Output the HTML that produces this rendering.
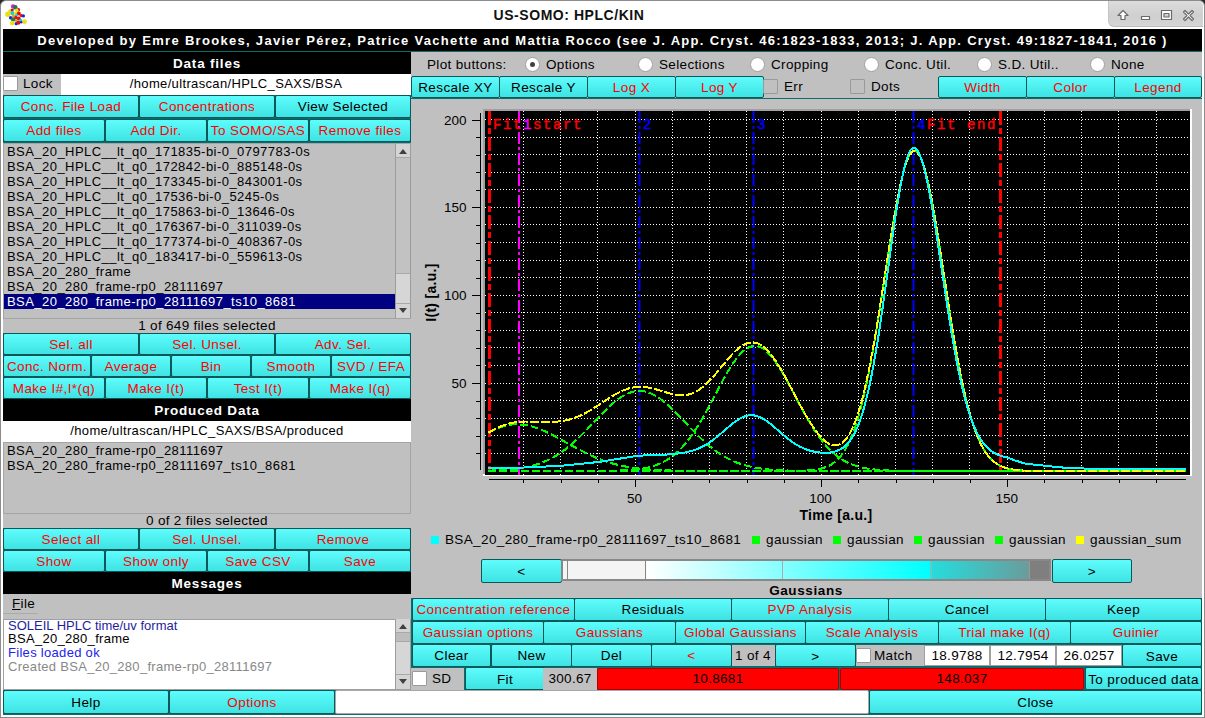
<!DOCTYPE html><html><head><meta charset="utf-8"><style>
*{margin:0;padding:0;box-sizing:border-box}
html,body{width:1205px;height:718px;overflow:hidden;background:#2a2a2a;font-family:"Liberation Sans",sans-serif;}
.t{position:absolute;white-space:nowrap;line-height:20px;font-size:13.5px;letter-spacing:0.35px;color:#000}
.b{position:absolute;box-sizing:content-box;border:1px solid #0a5858;border-radius:2px;background:linear-gradient(#5ffcfc,#3ee3e3);text-align:center;white-space:nowrap;overflow:hidden;font-size:13.5px;letter-spacing:0.4px}
.hb{position:absolute;background:#000;color:#fff;font-weight:bold;text-align:center;white-space:nowrap}
</style></head><body>
<div style="position:absolute;left:0;top:0;width:1205px;height:718px;background:#fff;border-radius:6px 6px 0 0;border:1px solid #8c8c8c;"></div>

<div style="position:absolute;left:1108px;top:1px;width:95px;height:26px;background:linear-gradient(#dcdcdc,#cfcfcf 60%,#d6d6d6);border-radius:0 5px 0 6px;border-bottom:1px solid #bdbdbd;border-left:1px solid #c4c4c4"></div>
<svg style="position:absolute;left:1108px;top:0" width="95" height="27">
<g fill="#fff" stroke="#6a6a6a" stroke-width="1.2" stroke-linejoin="round">
<path d="M15 10.5 L20 15.5 L17 15.5 L17 19.5 L13 19.5 L13 15.5 L10 15.5 Z"/>
<rect x="33.5" y="16.5" width="8" height="3"/>
<path d="M53.5 10.5 h10 v9 h-10 Z M56 13.5 v3.5 h5 v-3.5 Z" fill-rule="evenodd"/>
<path d="M75.5 12 L77 10.5 L80.5 14 L84 10.5 L85.5 12 L82 15.5 L85.5 19 L84 20.5 L80.5 17 L77 20.5 L75.5 19 L79 15.5 Z"/>
</g></svg>
<svg style="position:absolute;left:0px;top:0px" width="30" height="30"><circle cx="13.1" cy="6.4" r="2.1999999999999997" fill="#d020d0"/><circle cx="15.3" cy="7.4" r="2.3" fill="#207a50"/><circle cx="18.4" cy="9.7" r="1.8" fill="#e01010"/><circle cx="10" cy="11" r="1.8" fill="#e8e010"/><circle cx="12.2" cy="10.1" r="1.6" fill="#e01010"/><circle cx="16.7" cy="10.3" r="1.8" fill="#e8e010"/><circle cx="12.3" cy="13.1" r="2.1" fill="#10d0e0"/><circle cx="15.6" cy="13.4" r="1.7" fill="#e8e010"/><circle cx="18.8" cy="13.6" r="2.0" fill="#e01010"/><circle cx="21.4" cy="15.6" r="1.7" fill="#e01010"/><circle cx="23.4" cy="15.9" r="1.6" fill="#2020e0"/><circle cx="7.9" cy="14.2" r="2.6999999999999997" fill="#e8e010"/><circle cx="16.4" cy="15.3" r="1.4000000000000001" fill="#10d0e0"/><circle cx="13.4" cy="16" r="1.4000000000000001" fill="#f09010"/><circle cx="10.6" cy="17.8" r="1.7" fill="#2020e0"/><circle cx="15.9" cy="17.5" r="1.7" fill="#e01010"/><circle cx="18.7" cy="18.4" r="2.0" fill="#e01010"/><circle cx="13.1" cy="19.5" r="2.1999999999999997" fill="#207a50"/><circle cx="16.2" cy="20.6" r="1.4000000000000001" fill="#f09010"/><circle cx="20.6" cy="20.4" r="1.6" fill="#10d0e0"/><circle cx="24.5" cy="21.7" r="2.4" fill="#e8e010"/><circle cx="12.2" cy="23.1" r="2.3" fill="#e8e010"/><circle cx="16.2" cy="23.7" r="1.6" fill="#2020e0"/><circle cx="18.4" cy="22.8" r="2.0" fill="#e01010"/><circle cx="21.2" cy="22.3" r="1.2" fill="#2020e0"/></svg>
<div class="t" style="left:269px;width:600px;text-align:center;top:5px;font-weight:bold;font-size:14px;color:#111;letter-spacing:0.55px">US-SOMO: HPLC/KIN</div>
<div style="position:absolute;left:3px;top:29px;width:1199px;height:686px;background:#0b6d6d"></div>
<div class="hb" style="left:3px;top:29px;width:1199px;height:22px;line-height:22px;padding-top:1px;font-size:13px;letter-spacing:1.3px">Developed by Emre Brookes, Javier Pérez, Patrice Vachette and Mattia Rocco (see J. App. Cryst. 46:1823-1833, 2013; J. App. Cryst. 49:1827-1841, 2016 )</div>
<div class="hb" style="left:3px;top:52px;width:408px;height:22px;line-height:22px;padding-top:1px;font-size:13.5px;letter-spacing:0.8px">Data files</div>
<div style="position:absolute;left:3px;top:74px;width:58px;height:21px;background:#c0c0c0"></div>
<div style="position:absolute;left:3px;top:76px;width:15px;height:15px;background:#fff;border:1px solid #9a9a9a;border-radius:1px"></div>
<div class="t" style="left:23px;top:74px;font-size:13.5px">Lock</div>
<div style="position:absolute;left:61px;top:74px;width:350px;height:21px;background:#fff"></div>
<div class="t" style="left:-64px;width:600px;text-align:center;top:74px;font-size:13px">/home/ultrascan/HPLC_SAXS/BSA</div>
<div class="b" style="left:3px;top:95px;width:134px;height:21px;color:#ff0000;font-size:13.5px;line-height:21px;letter-spacing:0.4px">Conc. File Load</div>
<div class="b" style="left:139px;top:95px;width:134px;height:21px;color:#ff0000;font-size:13.5px;line-height:21px;letter-spacing:0.4px">Concentrations</div>
<div class="b" style="left:275px;top:95px;width:134px;height:21px;color:#000;font-size:13.5px;line-height:21px;letter-spacing:0.4px">View Selected</div>
<div class="b" style="left:3px;top:119px;width:100px;height:21px;color:#ff0000;font-size:13.5px;line-height:21px;letter-spacing:0.4px">Add files</div>
<div class="b" style="left:105px;top:119px;width:100px;height:21px;color:#ff0000;font-size:13.5px;line-height:21px;letter-spacing:0.4px">Add Dir.</div>
<div class="b" style="left:207px;top:119px;width:100px;height:21px;color:#ff0000;font-size:13.5px;line-height:21px;letter-spacing:0.4px">To SOMO/SAS</div>
<div class="b" style="left:309px;top:119px;width:100px;height:21px;color:#ff0000;font-size:13.5px;line-height:21px;letter-spacing:0.4px">Remove files</div>
<div style="position:absolute;left:3px;top:143px;width:408px;height:176px;background:#c0c0c0;border:1px solid #a4a4a4"></div>
<div class="t" style="left:7px;top:141.5px;font-size:13px;letter-spacing:0.45px">BSA_20_HPLC__lt_q0_171835-bi-0_0797783-0s</div>
<div class="t" style="left:7px;top:156.5px;font-size:13px;letter-spacing:0.45px">BSA_20_HPLC__lt_q0_172842-bi-0_885148-0s</div>
<div class="t" style="left:7px;top:171.5px;font-size:13px;letter-spacing:0.45px">BSA_20_HPLC__lt_q0_173345-bi-0_843001-0s</div>
<div class="t" style="left:7px;top:186.5px;font-size:13px;letter-spacing:0.45px">BSA_20_HPLC__lt_q0_17536-bi-0_5245-0s</div>
<div class="t" style="left:7px;top:201.5px;font-size:13px;letter-spacing:0.45px">BSA_20_HPLC__lt_q0_175863-bi-0_13646-0s</div>
<div class="t" style="left:7px;top:216.5px;font-size:13px;letter-spacing:0.45px">BSA_20_HPLC__lt_q0_176367-bi-0_311039-0s</div>
<div class="t" style="left:7px;top:231.5px;font-size:13px;letter-spacing:0.45px">BSA_20_HPLC__lt_q0_177374-bi-0_408367-0s</div>
<div class="t" style="left:7px;top:246.5px;font-size:13px;letter-spacing:0.45px">BSA_20_HPLC__lt_q0_183417-bi-0_559613-0s</div>
<div class="t" style="left:7px;top:261.5px;font-size:13px;letter-spacing:0.45px">BSA_20_280_frame</div>
<div class="t" style="left:7px;top:276.5px;font-size:13px;letter-spacing:0.45px">BSA_20_280_frame-rp0_28111697</div>
<div style="position:absolute;left:4px;top:294px;width:391px;height:15px;background:#000080"></div>
<div class="t" style="left:7px;top:291.5px;font-size:13px;color:#fff;letter-spacing:0.45px">BSA_20_280_frame-rp0_28111697_ts10_8681</div>
<div style="position:absolute;left:395px;top:144px;width:16px;height:174px;background:#d6d6d6;border-left:1px solid #9c9c9c;border-right:1px solid #9c9c9c"></div>
<div style="position:absolute;left:396px;top:144px;width:14px;height:14px;background:#d4d4d4;border-bottom:1px solid #a8a8a8"></div>
<svg style="position:absolute;left:396px;top:144px" width="14" height="14"><path d="M3 10 L7 5 L11 10 Z" fill="#404040"/></svg>
<div style="position:absolute;left:396px;top:158px;width:14px;height:116px;background:#c2c2c2;border-bottom:1px solid #a8a8a8"></div>
<div style="position:absolute;left:396px;top:303px;width:14px;height:15px;background:#d4d4d4;border-top:1px solid #a8a8a8"></div>
<svg style="position:absolute;left:396px;top:303px" width="14" height="14"><path d="M3 5 L7 10 L11 5 Z" fill="#404040"/></svg>
<div style="position:absolute;left:3px;top:319px;width:408px;height:14px;background:#c0c0c0"></div>
<div class="t" style="left:-93px;width:600px;text-align:center;top:316px;font-size:13.5px;letter-spacing:0.3px">1 of 649 files selected</div>
<div class="b" style="left:3px;top:333px;width:134px;height:20px;color:#ff0000;font-size:13.5px;line-height:22px;letter-spacing:0.4px">Sel. all</div>
<div class="b" style="left:139px;top:333px;width:134px;height:20px;color:#ff0000;font-size:13.5px;line-height:22px;letter-spacing:0.4px">Sel. Unsel.</div>
<div class="b" style="left:275px;top:333px;width:134px;height:20px;color:#ff0000;font-size:13.5px;line-height:22px;letter-spacing:0.4px">Adv. Sel.</div>
<div class="b" style="left:3px;top:355px;width:86px;height:20px;color:#ff0000;font-size:13.5px;line-height:22px;letter-spacing:0.4px">Conc. Norm.</div>
<div class="b" style="left:91px;top:355px;width:78px;height:20px;color:#ff0000;font-size:13.5px;line-height:22px;letter-spacing:0.4px">Average</div>
<div class="b" style="left:171px;top:355px;width:78px;height:20px;color:#ff0000;font-size:13.5px;line-height:22px;letter-spacing:0.4px">Bin</div>
<div class="b" style="left:251px;top:355px;width:78px;height:20px;color:#ff0000;font-size:13.5px;line-height:22px;letter-spacing:0.4px">Smooth</div>
<div class="b" style="left:331px;top:355px;width:78px;height:20px;color:#ff0000;font-size:13.5px;line-height:22px;letter-spacing:0.4px">SVD / EFA</div>
<div class="b" style="left:3px;top:377px;width:100px;height:20px;color:#ff0000;font-size:13.5px;line-height:22px;letter-spacing:0.4px">Make I#,I*(q)</div>
<div class="b" style="left:105px;top:377px;width:100px;height:20px;color:#ff0000;font-size:13.5px;line-height:22px;letter-spacing:0.4px">Make I(t)</div>
<div class="b" style="left:207px;top:377px;width:100px;height:20px;color:#ff0000;font-size:13.5px;line-height:22px;letter-spacing:0.4px">Test I(t)</div>
<div class="b" style="left:309px;top:377px;width:100px;height:20px;color:#ff0000;font-size:13.5px;line-height:22px;letter-spacing:0.4px">Make I(q)</div>
<div class="hb" style="left:3px;top:399px;width:408px;height:22px;line-height:22px;padding-top:1px;font-size:13.5px;letter-spacing:0.8px">Produced Data</div>
<div style="position:absolute;left:3px;top:421px;width:408px;height:21px;background:#fff"></div>
<div class="t" style="left:-93px;width:600px;text-align:center;top:421px;font-size:13px">/home/ultrascan/HPLC_SAXS/BSA/produced</div>
<div style="position:absolute;left:3px;top:442px;width:408px;height:72px;background:#c0c0c0;border:1px solid #a4a4a4"></div>
<div class="t" style="left:7px;top:441px;font-size:13px;letter-spacing:0.45px">BSA_20_280_frame-rp0_28111697</div>
<div class="t" style="left:7px;top:456px;font-size:13px;letter-spacing:0.45px">BSA_20_280_frame-rp0_28111697_ts10_8681</div>
<div style="position:absolute;left:3px;top:514px;width:408px;height:14px;background:#c0c0c0"></div>
<div class="t" style="left:-93px;width:600px;text-align:center;top:511px;font-size:13.5px;letter-spacing:0.3px">0 of 2 files selected</div>
<div class="b" style="left:3px;top:528px;width:134px;height:20px;color:#ff0000;font-size:13.5px;line-height:22px;letter-spacing:0.4px">Select all</div>
<div class="b" style="left:139px;top:528px;width:134px;height:20px;color:#ff0000;font-size:13.5px;line-height:22px;letter-spacing:0.4px">Sel. Unsel.</div>
<div class="b" style="left:275px;top:528px;width:134px;height:20px;color:#ff0000;font-size:13.5px;line-height:22px;letter-spacing:0.4px">Remove</div>
<div class="b" style="left:3px;top:550px;width:100px;height:20px;color:#ff0000;font-size:13.5px;line-height:22px;letter-spacing:0.4px">Show</div>
<div class="b" style="left:105px;top:550px;width:100px;height:20px;color:#ff0000;font-size:13.5px;line-height:22px;letter-spacing:0.4px">Show only</div>
<div class="b" style="left:207px;top:550px;width:100px;height:20px;color:#ff0000;font-size:13.5px;line-height:22px;letter-spacing:0.4px">Save CSV</div>
<div class="b" style="left:309px;top:550px;width:100px;height:20px;color:#ff0000;font-size:13.5px;line-height:22px;letter-spacing:0.4px">Save</div>
<div class="hb" style="left:3px;top:572px;width:408px;height:22px;line-height:22px;padding-top:1px;font-size:13.5px;letter-spacing:0.8px">Messages</div>
<div style="position:absolute;left:3px;top:594px;width:408px;height:25px;background:#c0c0c0"></div>
<div class="t" style="left:12px;top:594px;font-size:13.5px"><u>F</u>ile</div>
<div style="position:absolute;left:3px;top:613px;width:35px;height:1px;background:#ababab"></div>
<div style="position:absolute;left:3px;top:619px;width:408px;height:71px;background:#fff;border:1px solid #a0a0a0"></div>
<div class="t" style="left:8px;top:615.5px;font-size:13px;color:#1e1e9e;letter-spacing:0.0px">SOLEIL HPLC time/uv format</div>
<div class="t" style="left:8px;top:629.3px;font-size:13px;color:#000;letter-spacing:0.3px">BSA_20_280_frame</div>
<div class="t" style="left:8px;top:643.1px;font-size:13px;color:#2222ee;letter-spacing:0.3px">Files loaded ok</div>
<div class="t" style="left:8px;top:656.9px;font-size:13px;color:#888;letter-spacing:0.3px">Created BSA_20_280_frame-rp0_28111697</div>
<div style="position:absolute;left:395px;top:619px;width:16px;height:70px;background:#d6d6d6;border-left:1px solid #9c9c9c;border-right:1px solid #9c9c9c"></div>
<div style="position:absolute;left:396px;top:619px;width:14px;height:14px;background:#d4d4d4;border-bottom:1px solid #a8a8a8"></div>
<svg style="position:absolute;left:396px;top:619px" width="14" height="14"><path d="M3 10 L7 5 L11 10 Z" fill="#404040"/></svg>
<div style="position:absolute;left:396px;top:633px;width:14px;height:9px;background:#bdbdbd;border-bottom:1px solid #a8a8a8"></div>
<div style="position:absolute;left:396px;top:674px;width:14px;height:15px;background:#d4d4d4;border-top:1px solid #a8a8a8"></div>
<svg style="position:absolute;left:396px;top:674px" width="14" height="14"><path d="M3 5 L7 10 L11 5 Z" fill="#404040"/></svg>
<div class="b" style="left:3px;top:690px;width:164px;height:22px;color:#000;font-size:13.5px;line-height:24px;letter-spacing:0.4px">Help</div>
<div class="b" style="left:169px;top:690px;width:164px;height:22px;color:#ff0000;font-size:13.5px;line-height:24px;letter-spacing:0.4px">Options</div>
<div style="position:absolute;left:335px;top:690px;width:534px;height:24px;background:#fff;border:1px solid #a8a8a8;border-radius:2px"></div>
<div class="b" style="left:869px;top:690px;width:331px;height:22px;color:#000;font-size:13.5px;line-height:24px;letter-spacing:0.4px">Close</div>
<div style="position:absolute;left:411px;top:52px;width:791px;height:25px;background:#c0c0c0"></div>
<div class="t" style="left:427px;top:54.5px;font-size:13.5px">Plot buttons:</div>
<div style="position:absolute;left:525px;top:57px;width:13px;height:13px;border-radius:50%;background:#fff;border:1px solid #a0a0a0;box-sizing:content-box"><div style="position:absolute;left:4px;top:4px;width:5px;height:5px;border-radius:50%;background:#404040"></div></div>
<div class="t" style="left:546px;top:54.5px;font-size:13.5px">Options</div>
<div style="position:absolute;left:638px;top:57px;width:13px;height:13px;border-radius:50%;background:#fff;border:1px solid #a0a0a0;box-sizing:content-box"></div>
<div class="t" style="left:659px;top:54.5px;font-size:13.5px">Selections</div>
<div style="position:absolute;left:750px;top:57px;width:13px;height:13px;border-radius:50%;background:#fff;border:1px solid #a0a0a0;box-sizing:content-box"></div>
<div class="t" style="left:771px;top:54.5px;font-size:13.5px">Cropping</div>
<div style="position:absolute;left:864px;top:57px;width:13px;height:13px;border-radius:50%;background:#fff;border:1px solid #a0a0a0;box-sizing:content-box"></div>
<div class="t" style="left:885px;top:54.5px;font-size:13.5px">Conc. Util.</div>
<div style="position:absolute;left:977px;top:57px;width:13px;height:13px;border-radius:50%;background:#fff;border:1px solid #a0a0a0;box-sizing:content-box"></div>
<div class="t" style="left:998px;top:54.5px;font-size:13.5px">S.D. Util..</div>
<div style="position:absolute;left:1090px;top:57px;width:13px;height:13px;border-radius:50%;background:#fff;border:1px solid #a0a0a0;box-sizing:content-box"></div>
<div class="t" style="left:1111px;top:54.5px;font-size:13.5px">None</div>
<div style="position:absolute;left:411px;top:76px;width:791px;height:22px;background:#c0c0c0"></div>
<div class="b" style="left:411px;top:76px;width:87px;height:20px;color:#000;font-size:13.5px;line-height:22px;letter-spacing:0.4px">Rescale XY</div>
<div class="b" style="left:499px;top:76px;width:87px;height:20px;color:#000;font-size:13.5px;line-height:22px;letter-spacing:0.4px">Rescale Y</div>
<div class="b" style="left:587px;top:76px;width:87px;height:20px;color:#ff0000;font-size:13.5px;line-height:22px;letter-spacing:0.4px">Log X</div>
<div class="b" style="left:675px;top:76px;width:87px;height:20px;color:#ff0000;font-size:13.5px;line-height:22px;letter-spacing:0.4px">Log Y</div>
<div style="position:absolute;left:763px;top:79px;width:15px;height:15px;background:#c0c0c0;border:1px solid #9a9a9a;border-radius:1px"></div>
<div class="t" style="left:784px;top:76.5px;font-size:13.5px">Err</div>
<div style="position:absolute;left:850px;top:79px;width:15px;height:15px;background:#c0c0c0;border:1px solid #9a9a9a;border-radius:1px"></div>
<div class="t" style="left:871px;top:76.5px;font-size:13.5px">Dots</div>
<div class="b" style="left:938px;top:76px;width:87px;height:20px;color:#ff0000;font-size:13.5px;line-height:22px;letter-spacing:0.4px">Width</div>
<div class="b" style="left:1026px;top:76px;width:87px;height:20px;color:#ff0000;font-size:13.5px;line-height:22px;letter-spacing:0.4px">Color</div>
<div class="b" style="left:1114px;top:76px;width:86px;height:20px;color:#ff0000;font-size:13.5px;line-height:22px;letter-spacing:0.4px">Legend</div>
<div style="position:absolute;left:411px;top:99px;width:791px;height:499px;background:#c0c0c0"></div>
<div style="position:absolute;left:431px;top:536px;width:8px;height:8px;background:#00ffff"></div>
<div class="t" style="left:445px;top:530px;font-size:13.5px;letter-spacing:0.37px">BSA_20_280_frame-rp0_28111697_ts10_8681</div>
<div style="position:absolute;left:752px;top:536px;width:8px;height:8px;background:#00ff00"></div>
<div class="t" style="left:766px;top:530px;font-size:13.5px;letter-spacing:0.37px">gaussian</div>
<div style="position:absolute;left:833px;top:536px;width:8px;height:8px;background:#00ff00"></div>
<div class="t" style="left:847px;top:530px;font-size:13.5px;letter-spacing:0.37px">gaussian</div>
<div style="position:absolute;left:914px;top:536px;width:8px;height:8px;background:#00ff00"></div>
<div class="t" style="left:928px;top:530px;font-size:13.5px;letter-spacing:0.37px">gaussian</div>
<div style="position:absolute;left:995px;top:536px;width:8px;height:8px;background:#00ff00"></div>
<div class="t" style="left:1009px;top:530px;font-size:13.5px;letter-spacing:0.37px">gaussian</div>
<div style="position:absolute;left:1076px;top:536px;width:8px;height:8px;background:#ffff00"></div>
<div class="t" style="left:1090px;top:530px;font-size:13.5px;letter-spacing:0.37px">gaussian_sum</div>
<div class="b" style="left:481px;top:559px;width:79px;height:22px;color:#000;font-size:13.5px;line-height:24px;letter-spacing:0.4px">&lt;</div>
<div class="b" style="left:1052px;top:559px;width:78px;height:22px;color:#000;font-size:13.5px;line-height:24px;letter-spacing:0.4px">&gt;</div>
<div style="position:absolute;left:561px;top:559px;width:490px;height:22px;background:#888;"></div>
<div style="position:absolute;left:563px;top:561px;width:486px;height:18px;background:linear-gradient(90deg,#f4f4f4 0px,#f4f4f4 83px,#ffffff 84px,#00ffff 368px,#26dcdc 369px,#6a9c9c 466px,#7f7f7f 467px,#7f7f7f 486px)"></div>
<div style="position:absolute;left:567px;top:561px;width:1px;height:18px;background:#888"></div>
<div style="position:absolute;left:645px;top:561px;width:1px;height:18px;background:#888"></div>
<div style="position:absolute;left:930px;top:561px;width:1px;height:18px;background:#aaa"></div>
<div style="position:absolute;left:782px;top:561px;width:1px;height:18px;background:#aaa"></div>
<div style="position:absolute;left:1029px;top:561px;width:1px;height:18px;background:#999"></div>
<div class="t" style="left:506px;width:600px;text-align:center;top:581px;font-weight:bold;font-size:13.5px;letter-spacing:0.6px">Gaussians</div>
<div class="b" style="left:412px;top:598px;width:161px;height:21px;color:#ff0000;font-size:13.5px;line-height:22.0px;letter-spacing:0.4px">Concentration reference</div>
<div class="b" style="left:574px;top:598px;width:156px;height:21px;color:#000;font-size:13.5px;line-height:22.0px;letter-spacing:0.4px">Residuals</div>
<div class="b" style="left:731px;top:598px;width:156px;height:21px;color:#ff0000;font-size:13.5px;line-height:22.0px;letter-spacing:0.4px">PVP Analysis</div>
<div class="b" style="left:888px;top:598px;width:156px;height:21px;color:#000;font-size:13.5px;line-height:22.0px;letter-spacing:0.4px">Cancel</div>
<div class="b" style="left:1045px;top:598px;width:155px;height:21px;color:#000;font-size:13.5px;line-height:22.0px;letter-spacing:0.4px">Keep</div>
<div class="b" style="left:412px;top:621px;width:130px;height:21px;color:#ff0000;font-size:13.5px;line-height:22.0px;letter-spacing:0.4px">Gaussian options</div>
<div class="b" style="left:543px;top:621px;width:131px;height:21px;color:#ff0000;font-size:13.5px;line-height:22.0px;letter-spacing:0.4px">Gaussians</div>
<div class="b" style="left:675px;top:621px;width:129px;height:21px;color:#ff0000;font-size:13.5px;line-height:22.0px;letter-spacing:0.4px">Global Gaussians</div>
<div class="b" style="left:805px;top:621px;width:132px;height:21px;color:#ff0000;font-size:13.5px;line-height:22.0px;letter-spacing:0.4px">Scale Analysis</div>
<div class="b" style="left:938px;top:621px;width:131px;height:21px;color:#ff0000;font-size:13.5px;line-height:22.0px;letter-spacing:0.4px">Trial make I(q)</div>
<div class="b" style="left:1070px;top:621px;width:130px;height:21px;color:#ff0000;font-size:13.5px;line-height:22.0px;letter-spacing:0.4px">Guinier</div>
<div class="b" style="left:412px;top:644px;width:77px;height:21px;color:#000;font-size:13.5px;line-height:22.0px;letter-spacing:0.4px">Clear</div>
<div class="b" style="left:491px;top:644px;width:79px;height:21px;color:#000;font-size:13.5px;line-height:22.0px;letter-spacing:0.4px">New</div>
<div class="b" style="left:571px;top:644px;width:79px;height:21px;color:#000;font-size:13.5px;line-height:22.0px;letter-spacing:0.4px">Del</div>
<div class="b" style="left:651px;top:644px;width:79px;height:21px;color:#ff0000;font-size:13.5px;line-height:22.0px;letter-spacing:0.4px">&lt;</div>
<div style="position:absolute;left:732px;top:645px;width:43px;height:21px;background:#c0c0c0"></div>
<div class="t" style="left:453px;width:600px;text-align:center;top:645.5px;font-size:13.5px">1 of 4</div>
<div class="b" style="left:775px;top:644px;width:79px;height:21px;color:#000;font-size:13.5px;line-height:23px;letter-spacing:0.4px">&gt;</div>
<div style="position:absolute;left:856px;top:645px;width:68px;height:21px;background:#c0c0c0"></div>
<div style="position:absolute;left:856px;top:648px;width:15px;height:15px;background:#fff;border:1px solid #9a9a9a;border-radius:1px"></div>
<div class="t" style="left:874px;top:645.5px;font-size:13.5px">Match</div>
<div style="position:absolute;left:924px;top:645px;width:66px;height:21px;background:#fff;border:1px solid #a0a0a0"></div>
<div class="t" style="left:657.0px;width:600px;text-align:center;top:645.5px;font-size:13.5px">18.9788</div>
<div style="position:absolute;left:990px;top:645px;width:66px;height:21px;background:#fff;border:1px solid #a0a0a0"></div>
<div class="t" style="left:723.0px;width:600px;text-align:center;top:645.5px;font-size:13.5px">12.7954</div>
<div style="position:absolute;left:1056px;top:645px;width:66px;height:21px;background:#fff;border:1px solid #a0a0a0"></div>
<div class="t" style="left:789.0px;width:600px;text-align:center;top:645.5px;font-size:13.5px">26.0257</div>
<div class="b" style="left:1122px;top:644px;width:78px;height:21px;color:#000;font-size:13.5px;line-height:23px;letter-spacing:0.4px">Save</div>
<div style="position:absolute;left:411px;top:668px;width:53px;height:22px;background:#c0c0c0"></div>
<div style="position:absolute;left:412px;top:671px;width:15px;height:15px;background:#fff;border:1px solid #9a9a9a;border-radius:1px"></div>
<div class="t" style="left:432px;top:668.5px;font-size:13.5px">SD</div>
<div class="b" style="left:465px;top:667px;width:78px;height:21px;color:#000;font-size:13.5px;line-height:23px;letter-spacing:0.4px">Fit</div>
<div style="position:absolute;left:543px;top:668px;width:54px;height:22px;background:#c0c0c0"></div>
<div class="t" style="left:270px;width:600px;text-align:center;top:668.5px;font-size:13.5px;letter-spacing:0.3px">300.67</div>
<div style="position:absolute;left:597px;top:668px;width:242px;height:22px;background:#ff0000;border:1px solid #b00000;border-radius:2px"></div>
<div class="t" style="left:418px;width:600px;text-align:center;top:669px;font-size:13.5px;letter-spacing:0.3px">10.8681</div>
<div style="position:absolute;left:840px;top:668px;width:244px;height:22px;background:#ff0000;border:1px solid #b00000;border-radius:2px"></div>
<div class="t" style="left:662px;width:600px;text-align:center;top:669px;font-size:13.5px;letter-spacing:0.3px">148.037</div>
<div class="b" style="left:1085px;top:667px;width:115px;height:21px;color:#000;font-size:13.5px;line-height:23px;letter-spacing:0.4px">To produced data</div>
<svg style="position:absolute;left:0;top:0" width="1205" height="718">
<rect x="483" y="109" width="709" height="367" fill="#fff"/>
<rect x="483" y="109" width="707" height="365" fill="#a0a0a0"/>
<rect x="485" y="111" width="705" height="364" fill="#000"/>
<defs><clipPath id="c"><rect x="485" y="111" width="705" height="364"/></clipPath></defs>
<g clip-path="url(#c)">
<line x1="523.5" y1="111" x2="523.5" y2="475" stroke="#fff" stroke-width="1" stroke-dasharray="1 2"/>
<line x1="560.5" y1="111" x2="560.5" y2="475" stroke="#fff" stroke-width="1" stroke-dasharray="1 2"/>
<line x1="597.5" y1="111" x2="597.5" y2="475" stroke="#fff" stroke-width="1" stroke-dasharray="1 2"/>
<line x1="635.5" y1="111" x2="635.5" y2="475" stroke="#fff" stroke-width="1" stroke-dasharray="1 2"/>
<line x1="672.5" y1="111" x2="672.5" y2="475" stroke="#fff" stroke-width="1" stroke-dasharray="1 2"/>
<line x1="709.5" y1="111" x2="709.5" y2="475" stroke="#fff" stroke-width="1" stroke-dasharray="1 2"/>
<line x1="746.5" y1="111" x2="746.5" y2="475" stroke="#fff" stroke-width="1" stroke-dasharray="1 2"/>
<line x1="783.5" y1="111" x2="783.5" y2="475" stroke="#fff" stroke-width="1" stroke-dasharray="1 2"/>
<line x1="821.5" y1="111" x2="821.5" y2="475" stroke="#fff" stroke-width="1" stroke-dasharray="1 2"/>
<line x1="858.5" y1="111" x2="858.5" y2="475" stroke="#fff" stroke-width="1" stroke-dasharray="1 2"/>
<line x1="895.5" y1="111" x2="895.5" y2="475" stroke="#fff" stroke-width="1" stroke-dasharray="1 2"/>
<line x1="932.5" y1="111" x2="932.5" y2="475" stroke="#fff" stroke-width="1" stroke-dasharray="1 2"/>
<line x1="969.5" y1="111" x2="969.5" y2="475" stroke="#fff" stroke-width="1" stroke-dasharray="1 2"/>
<line x1="1007.5" y1="111" x2="1007.5" y2="475" stroke="#fff" stroke-width="1" stroke-dasharray="1 2"/>
<line x1="1044.5" y1="111" x2="1044.5" y2="475" stroke="#fff" stroke-width="1" stroke-dasharray="1 2"/>
<line x1="1081.5" y1="111" x2="1081.5" y2="475" stroke="#fff" stroke-width="1" stroke-dasharray="1 2"/>
<line x1="1118.5" y1="111" x2="1118.5" y2="475" stroke="#fff" stroke-width="1" stroke-dasharray="1 2"/>
<line x1="1156.5" y1="111" x2="1156.5" y2="475" stroke="#fff" stroke-width="1" stroke-dasharray="1 2"/>
<line x1="485" y1="453.5" x2="1190" y2="453.5" stroke="#fff" stroke-width="1" stroke-dasharray="1 2"/>
<line x1="485" y1="435.5" x2="1190" y2="435.5" stroke="#fff" stroke-width="1" stroke-dasharray="1 2"/>
<line x1="485" y1="418.5" x2="1190" y2="418.5" stroke="#fff" stroke-width="1" stroke-dasharray="1 2"/>
<line x1="485" y1="400.5" x2="1190" y2="400.5" stroke="#fff" stroke-width="1" stroke-dasharray="1 2"/>
<line x1="485" y1="383.5" x2="1190" y2="383.5" stroke="#fff" stroke-width="1" stroke-dasharray="1 2"/>
<line x1="485" y1="365.5" x2="1190" y2="365.5" stroke="#fff" stroke-width="1" stroke-dasharray="1 2"/>
<line x1="485" y1="347.5" x2="1190" y2="347.5" stroke="#fff" stroke-width="1" stroke-dasharray="1 2"/>
<line x1="485" y1="330.5" x2="1190" y2="330.5" stroke="#fff" stroke-width="1" stroke-dasharray="1 2"/>
<line x1="485" y1="312.5" x2="1190" y2="312.5" stroke="#fff" stroke-width="1" stroke-dasharray="1 2"/>
<line x1="485" y1="295.5" x2="1190" y2="295.5" stroke="#fff" stroke-width="1" stroke-dasharray="1 2"/>
<line x1="485" y1="277.5" x2="1190" y2="277.5" stroke="#fff" stroke-width="1" stroke-dasharray="1 2"/>
<line x1="485" y1="260.5" x2="1190" y2="260.5" stroke="#fff" stroke-width="1" stroke-dasharray="1 2"/>
<line x1="485" y1="242.5" x2="1190" y2="242.5" stroke="#fff" stroke-width="1" stroke-dasharray="1 2"/>
<line x1="485" y1="224.5" x2="1190" y2="224.5" stroke="#fff" stroke-width="1" stroke-dasharray="1 2"/>
<line x1="485" y1="207.5" x2="1190" y2="207.5" stroke="#fff" stroke-width="1" stroke-dasharray="1 2"/>
<line x1="485" y1="189.5" x2="1190" y2="189.5" stroke="#fff" stroke-width="1" stroke-dasharray="1 2"/>
<line x1="485" y1="172.5" x2="1190" y2="172.5" stroke="#fff" stroke-width="1" stroke-dasharray="1 2"/>
<line x1="485" y1="154.5" x2="1190" y2="154.5" stroke="#fff" stroke-width="1" stroke-dasharray="1 2"/>
<line x1="485" y1="137.5" x2="1190" y2="137.5" stroke="#fff" stroke-width="1" stroke-dasharray="1 2"/>
<line x1="485" y1="119.5" x2="1190" y2="119.5" stroke="#fff" stroke-width="1" stroke-dasharray="1 2"/>
<line x1="489.5" y1="111" x2="489.5" y2="475" stroke="#ff0000" stroke-width="3" stroke-dasharray="14 3 6 3"/>
<line x1="1000.5" y1="111" x2="1000.5" y2="475" stroke="#ff0000" stroke-width="3" stroke-dasharray="14 3 6 3"/>
<line x1="519" y1="111" x2="519" y2="475" stroke="#ff00ff" stroke-width="2" stroke-dasharray="12 3 3 3"/>
<line x1="639.5" y1="111" x2="639.5" y2="475" stroke="#0000ff" stroke-width="2" stroke-dasharray="12 3 3 3"/>
<line x1="753.5" y1="111" x2="753.5" y2="475" stroke="#0000ff" stroke-width="2" stroke-dasharray="12 3 3 3"/>
<line x1="913.5" y1="111" x2="913.5" y2="475" stroke="#0000ff" stroke-width="2" stroke-dasharray="12 3 3 3"/>
<path d="M488.4,433.0 L490.2,432.0 L492.1,431.0 L493.9,430.1 L495.8,429.2 L497.7,428.4 L499.5,427.7 L501.4,427.0 L503.2,426.4 L505.1,425.9 L507.0,425.4 L508.8,425.0 L510.7,424.7 L512.5,424.5 L514.4,424.4 L516.3,424.3 L518.1,424.4 L520.0,424.5 L521.9,424.6 L523.7,424.9 L525.6,425.1 L527.4,425.5 L529.3,425.9 L531.2,426.3 L533.0,426.9 L534.9,427.4 L536.7,428.1 L538.6,428.7 L540.5,429.4 L542.3,430.2 L544.2,431.0 L546.0,431.8 L547.9,432.7 L549.8,433.6 L551.6,434.6 L553.5,435.5 L555.3,436.5 L557.2,437.5 L559.1,438.5 L560.9,439.5 L562.8,440.6 L564.7,441.6 L566.5,442.7 L568.4,443.7 L570.2,444.8 L572.1,445.8 L574.0,446.8 L575.8,447.8 L577.7,448.8 L579.5,449.8 L581.4,450.8 L583.3,451.8 L585.1,452.7 L587.0,453.6 L588.8,454.5 L590.7,455.4 L592.6,456.2 L594.4,457.0 L596.3,457.8 L598.2,458.6 L600.0,459.3 L601.9,460.0 L603.7,460.7 L605.6,461.3 L607.5,461.9 L609.3,462.5 L611.2,463.1 L613.0,463.6 L614.9,464.1 L616.8,464.6 L618.6,465.1 L620.5,465.5 L622.3,465.9 L624.2,466.3 L626.1,466.6 L627.9,467.0 L629.8,467.3 L631.7,467.6 L633.5,467.8 L635.4,468.1 L637.2,468.3 L639.1,468.6 L641.0,468.8 L642.8,468.9 L644.7,469.1 L646.5,469.3 L648.4,469.4 L650.3,469.6 L652.1,469.7 L654.0,469.8 L655.8,469.9 L657.7,470.0 L659.6,470.1 L661.4,470.2 L663.3,470.3 L665.1,470.3 L667.0,470.4 L668.9,470.4 L670.7,470.5 L672.6,470.5 L674.5,470.6 L676.3,470.6 L678.2,470.6 L680.0,470.7 L681.9,470.7 L683.8,470.7 L685.6,470.7 L687.5,470.8 L689.3,470.8 L691.2,470.8 L693.1,470.8 L694.9,470.8 L696.8,470.8 L698.6,470.8 L700.5,470.8 L702.4,470.9 L704.2,470.9 L706.1,470.9 L708.0,470.9 L709.8,470.9 L711.7,470.9 L713.5,470.9 L715.4,470.9 L717.3,470.9 L719.1,470.9 L721.0,470.9 L722.8,470.9 L724.7,470.9 L726.6,470.9 L728.4,470.9 L730.3,470.9 L732.1,470.9 L734.0,470.9 L735.9,470.9 L737.7,470.9 L739.6,470.9 L741.4,470.9 L743.3,470.9 L745.2,470.9 L747.0,470.9 L748.9,470.9 L750.8,470.9 L752.6,470.9 L754.5,470.9 L756.3,470.9 L758.2,470.9 L760.1,470.9 L761.9,470.9 L763.8,470.9 L765.6,470.9 L767.5,470.9 L769.4,470.9 L771.2,470.9 L773.1,470.9 L774.9,470.9 L776.8,470.9 L778.7,470.9 L780.5,470.9 L782.4,470.9 L784.3,470.9 L786.1,470.9 L788.0,470.9 L789.8,470.9 L791.7,470.9 L793.6,470.9 L795.4,470.9 L797.3,470.9 L799.1,470.9 L801.0,470.9 L802.9,470.9 L804.7,470.9 L806.6,470.9 L808.4,470.9 L810.3,470.9 L812.2,470.9 L814.0,470.9 L815.9,470.9 L817.8,470.9 L819.6,470.9 L821.5,470.9 L823.3,470.9 L825.2,470.9 L827.1,470.9 L828.9,470.9 L830.8,470.9 L832.6,470.9 L834.5,470.9 L836.4,470.9 L838.2,470.9 L840.1,470.9 L841.9,470.9 L843.8,470.9 L845.7,470.9 L847.5,470.9 L849.4,470.9 L851.2,470.9 L853.1,470.9 L855.0,470.9 L856.8,470.9 L858.7,470.9 L860.6,470.9 L862.4,470.9 L864.3,470.9 L866.1,470.9 L868.0,470.9 L869.9,470.9 L871.7,470.9 L873.6,470.9 L875.4,470.9 L877.3,470.9 L879.2,470.9 L881.0,470.9 L882.9,470.9 L884.7,470.9 L886.6,470.9 L888.5,470.9 L890.3,470.9 L892.2,470.9 L894.1,470.9 L895.9,470.9 L897.8,470.9 L899.6,470.9 L901.5,470.9 L903.4,470.9 L905.2,470.9 L907.1,470.9 L908.9,470.9 L910.8,470.9 L912.7,470.9 L914.5,470.9 L916.4,470.9 L918.2,470.9 L920.1,470.9 L922.0,470.9 L923.8,470.9 L925.7,470.9 L927.5,470.9 L929.4,470.9 L931.3,470.9 L933.1,470.9 L935.0,470.9 L936.9,470.9 L938.7,470.9 L940.6,470.9 L942.4,470.9 L944.3,470.9 L946.2,470.9 L948.0,470.9 L949.9,470.9 L951.7,470.9 L953.6,470.9 L955.5,470.9 L957.3,470.9 L959.2,470.9 L961.0,470.9 L962.9,470.9 L964.8,470.9 L966.6,470.9 L968.5,470.9 L970.4,470.9 L972.2,470.9 L974.1,470.9 L975.9,470.9 L977.8,470.9 L979.7,470.9 L981.5,470.9 L983.4,470.9 L985.2,470.9 L987.1,470.9 L989.0,470.9 L990.8,470.9 L992.7,470.9 L994.5,470.9 L996.4,470.9 L998.3,470.9 L1000.1,470.9 L1002.0,470.9 L1003.9,470.9 L1005.7,470.9 L1007.6,470.9 L1009.4,470.9 L1011.3,470.9 L1013.2,470.9 L1015.0,470.9 L1016.9,470.9 L1018.7,470.9 L1020.6,470.9 L1022.5,470.9 L1024.3,470.9 L1026.2,470.9 L1028.0,470.9 L1029.9,470.9 L1031.8,470.9 L1033.6,470.9 L1035.5,470.9 L1037.3,470.9 L1039.2,470.9 L1041.1,470.9 L1042.9,470.9 L1044.8,470.9 L1046.7,470.9 L1048.5,470.9 L1050.4,470.9 L1052.2,470.9 L1054.1,470.9 L1056.0,470.9 L1057.8,470.9 L1059.7,470.9 L1061.5,470.9 L1063.4,470.9 L1065.3,470.9 L1067.1,470.9 L1069.0,470.9 L1070.8,470.9 L1072.7,470.9 L1074.6,470.9 L1076.4,470.9 L1078.3,470.9 L1080.2,470.9 L1082.0,470.9 L1083.9,470.9 L1085.7,470.9 L1087.6,470.9 L1089.5,470.9 L1091.3,470.9 L1093.2,470.9 L1095.0,470.9 L1096.9,470.9 L1098.8,470.9 L1100.6,470.9 L1102.5,470.9 L1104.3,470.9 L1106.2,470.9 L1108.1,470.9 L1109.9,470.9 L1111.8,470.9 L1113.6,470.9 L1115.5,470.9 L1117.4,470.9 L1119.2,470.9 L1121.1,470.9 L1123.0,470.9 L1124.8,470.9 L1126.7,470.9 L1128.5,470.9 L1130.4,470.9 L1132.3,470.9 L1134.1,470.9 L1136.0,470.9 L1137.8,470.9 L1139.7,470.9 L1141.6,470.9 L1143.4,470.9 L1145.3,470.9 L1147.1,470.9 L1149.0,470.9 L1150.9,470.9 L1152.7,470.9 L1154.6,470.9 L1156.5,470.9 L1158.3,470.9 L1160.2,470.9 L1162.0,470.9 L1163.9,470.9 L1165.8,470.9 L1167.6,470.9 L1169.5,470.9 L1171.3,470.9 L1173.2,470.9 L1175.1,470.9 L1176.9,470.9 L1178.8,470.9 L1180.6,470.9 L1182.5,470.9 L1184.4,470.9 L1186.2,470.9" fill="none" stroke="#00ff00" stroke-width="2" stroke-dasharray="8 3" shape-rendering="crispEdges"/>
<path d="M488.4,470.6 L490.2,470.5 L492.1,470.5 L493.9,470.4 L495.8,470.3 L497.7,470.2 L499.5,470.2 L501.4,470.1 L503.2,469.9 L505.1,469.8 L507.0,469.7 L508.8,469.5 L510.7,469.4 L512.5,469.2 L514.4,469.0 L516.3,468.8 L518.1,468.5 L520.0,468.2 L521.9,468.0 L523.7,467.6 L525.6,467.3 L527.4,466.9 L529.3,466.5 L531.2,466.0 L533.0,465.5 L534.9,465.0 L536.7,464.5 L538.6,463.8 L540.5,463.2 L542.3,462.5 L544.2,461.7 L546.0,460.9 L547.9,460.1 L549.8,459.2 L551.6,458.2 L553.5,457.2 L555.3,456.1 L557.2,455.0 L559.1,453.8 L560.9,452.5 L562.8,451.2 L564.7,449.9 L566.5,448.4 L568.4,447.0 L570.2,445.4 L572.1,443.8 L574.0,442.2 L575.8,440.5 L577.7,438.7 L579.5,437.0 L581.4,435.1 L583.3,433.3 L585.1,431.4 L587.0,429.5 L588.8,427.5 L590.7,425.6 L592.6,423.6 L594.4,421.6 L596.3,419.7 L598.2,417.7 L600.0,415.8 L601.9,413.8 L603.7,412.0 L605.6,410.1 L607.5,408.3 L609.3,406.6 L611.2,404.9 L613.0,403.2 L614.9,401.7 L616.8,400.2 L618.6,398.8 L620.5,397.6 L622.3,396.4 L624.2,395.3 L626.1,394.3 L627.9,393.5 L629.8,392.7 L631.7,392.1 L633.5,391.6 L635.4,391.3 L637.2,391.1 L639.1,391.0 L641.0,391.0 L642.8,391.2 L644.7,391.5 L646.5,391.9 L648.4,392.5 L650.3,393.2 L652.1,394.0 L654.0,394.9 L655.8,395.9 L657.7,397.1 L659.6,398.3 L661.4,399.7 L663.3,401.1 L665.1,402.6 L667.0,404.2 L668.9,405.9 L670.7,407.6 L672.6,409.4 L674.5,411.2 L676.3,413.1 L678.2,415.0 L680.0,416.9 L681.9,418.9 L683.8,420.8 L685.6,422.8 L687.5,424.8 L689.3,426.7 L691.2,428.7 L693.1,430.6 L694.9,432.5 L696.8,434.4 L698.6,436.2 L700.5,438.0 L702.4,439.8 L704.2,441.5 L706.1,443.2 L708.0,444.8 L709.8,446.4 L711.7,447.9 L713.5,449.3 L715.4,450.7 L717.3,452.0 L719.1,453.3 L721.0,454.5 L722.8,455.7 L724.7,456.8 L726.6,457.8 L728.4,458.8 L730.3,459.7 L732.1,460.6 L734.0,461.4 L735.9,462.2 L737.7,462.9 L739.6,463.6 L741.4,464.2 L743.3,464.8 L745.2,465.3 L747.0,465.8 L748.9,466.3 L750.8,466.7 L752.6,467.1 L754.5,467.5 L756.3,467.8 L758.2,468.1 L760.1,468.4 L761.9,468.7 L763.8,468.9 L765.6,469.1 L767.5,469.3 L769.4,469.5 L771.2,469.6 L773.1,469.8 L774.9,469.9 L776.8,470.0 L778.7,470.1 L780.5,470.2 L782.4,470.3 L784.3,470.4 L786.1,470.4 L788.0,470.5 L789.8,470.5 L791.7,470.6 L793.6,470.6 L795.4,470.7 L797.3,470.7 L799.1,470.7 L801.0,470.7 L802.9,470.8 L804.7,470.8 L806.6,470.8 L808.4,470.8 L810.3,470.8 L812.2,470.8 L814.0,470.8 L815.9,470.9 L817.8,470.9 L819.6,470.9 L821.5,470.9 L823.3,470.9 L825.2,470.9 L827.1,470.9 L828.9,470.9 L830.8,470.9 L832.6,470.9 L834.5,470.9 L836.4,470.9 L838.2,470.9 L840.1,470.9 L841.9,470.9 L843.8,470.9 L845.7,470.9 L847.5,470.9 L849.4,470.9 L851.2,470.9 L853.1,470.9 L855.0,470.9 L856.8,470.9 L858.7,470.9 L860.6,470.9 L862.4,470.9 L864.3,470.9 L866.1,470.9 L868.0,470.9 L869.9,470.9 L871.7,470.9 L873.6,470.9 L875.4,470.9 L877.3,470.9 L879.2,470.9 L881.0,470.9 L882.9,470.9 L884.7,470.9 L886.6,470.9 L888.5,470.9 L890.3,470.9 L892.2,470.9 L894.1,470.9 L895.9,470.9 L897.8,470.9 L899.6,470.9 L901.5,470.9 L903.4,470.9 L905.2,470.9 L907.1,470.9 L908.9,470.9 L910.8,470.9 L912.7,470.9 L914.5,470.9 L916.4,470.9 L918.2,470.9 L920.1,470.9 L922.0,470.9 L923.8,470.9 L925.7,470.9 L927.5,470.9 L929.4,470.9 L931.3,470.9 L933.1,470.9 L935.0,470.9 L936.9,470.9 L938.7,470.9 L940.6,470.9 L942.4,470.9 L944.3,470.9 L946.2,470.9 L948.0,470.9 L949.9,470.9 L951.7,470.9 L953.6,470.9 L955.5,470.9 L957.3,470.9 L959.2,470.9 L961.0,470.9 L962.9,470.9 L964.8,470.9 L966.6,470.9 L968.5,470.9 L970.4,470.9 L972.2,470.9 L974.1,470.9 L975.9,470.9 L977.8,470.9 L979.7,470.9 L981.5,470.9 L983.4,470.9 L985.2,470.9 L987.1,470.9 L989.0,470.9 L990.8,470.9 L992.7,470.9 L994.5,470.9 L996.4,470.9 L998.3,470.9 L1000.1,470.9 L1002.0,470.9 L1003.9,470.9 L1005.7,470.9 L1007.6,470.9 L1009.4,470.9 L1011.3,470.9 L1013.2,470.9 L1015.0,470.9 L1016.9,470.9 L1018.7,470.9 L1020.6,470.9 L1022.5,470.9 L1024.3,470.9 L1026.2,470.9 L1028.0,470.9 L1029.9,470.9 L1031.8,470.9 L1033.6,470.9 L1035.5,470.9 L1037.3,470.9 L1039.2,470.9 L1041.1,470.9 L1042.9,470.9 L1044.8,470.9 L1046.7,470.9 L1048.5,470.9 L1050.4,470.9 L1052.2,470.9 L1054.1,470.9 L1056.0,470.9 L1057.8,470.9 L1059.7,470.9 L1061.5,470.9 L1063.4,470.9 L1065.3,470.9 L1067.1,470.9 L1069.0,470.9 L1070.8,470.9 L1072.7,470.9 L1074.6,470.9 L1076.4,470.9 L1078.3,470.9 L1080.2,470.9 L1082.0,470.9 L1083.9,470.9 L1085.7,470.9 L1087.6,470.9 L1089.5,470.9 L1091.3,470.9 L1093.2,470.9 L1095.0,470.9 L1096.9,470.9 L1098.8,470.9 L1100.6,470.9 L1102.5,470.9 L1104.3,470.9 L1106.2,470.9 L1108.1,470.9 L1109.9,470.9 L1111.8,470.9 L1113.6,470.9 L1115.5,470.9 L1117.4,470.9 L1119.2,470.9 L1121.1,470.9 L1123.0,470.9 L1124.8,470.9 L1126.7,470.9 L1128.5,470.9 L1130.4,470.9 L1132.3,470.9 L1134.1,470.9 L1136.0,470.9 L1137.8,470.9 L1139.7,470.9 L1141.6,470.9 L1143.4,470.9 L1145.3,470.9 L1147.1,470.9 L1149.0,470.9 L1150.9,470.9 L1152.7,470.9 L1154.6,470.9 L1156.5,470.9 L1158.3,470.9 L1160.2,470.9 L1162.0,470.9 L1163.9,470.9 L1165.8,470.9 L1167.6,470.9 L1169.5,470.9 L1171.3,470.9 L1173.2,470.9 L1175.1,470.9 L1176.9,470.9 L1178.8,470.9 L1180.6,470.9 L1182.5,470.9 L1184.4,470.9 L1186.2,470.9" fill="none" stroke="#00ff00" stroke-width="2" stroke-dasharray="8 3" shape-rendering="crispEdges"/>
<path d="M488.4,470.9 L490.2,470.9 L492.1,470.9 L493.9,470.9 L495.8,470.9 L497.7,470.9 L499.5,470.9 L501.4,470.9 L503.2,470.9 L505.1,470.9 L507.0,470.9 L508.8,470.9 L510.7,470.9 L512.5,470.9 L514.4,470.9 L516.3,470.9 L518.1,470.9 L520.0,470.9 L521.9,470.9 L523.7,470.9 L525.6,470.9 L527.4,470.9 L529.3,470.9 L531.2,470.9 L533.0,470.9 L534.9,470.9 L536.7,470.9 L538.6,470.9 L540.5,470.9 L542.3,470.9 L544.2,470.9 L546.0,470.9 L547.9,470.9 L549.8,470.9 L551.6,470.9 L553.5,470.9 L555.3,470.9 L557.2,470.9 L559.1,470.9 L560.9,470.9 L562.8,470.9 L564.7,470.9 L566.5,470.9 L568.4,470.9 L570.2,470.9 L572.1,470.9 L574.0,470.9 L575.8,470.9 L577.7,470.9 L579.5,470.9 L581.4,470.9 L583.3,470.9 L585.1,470.9 L587.0,470.9 L588.8,470.9 L590.7,470.9 L592.6,470.9 L594.4,470.9 L596.3,470.9 L598.2,470.8 L600.0,470.8 L601.9,470.8 L603.7,470.8 L605.6,470.8 L607.5,470.8 L609.3,470.7 L611.2,470.7 L613.0,470.7 L614.9,470.6 L616.8,470.6 L618.6,470.5 L620.5,470.5 L622.3,470.4 L624.2,470.3 L626.1,470.2 L627.9,470.1 L629.8,470.0 L631.7,469.9 L633.5,469.7 L635.4,469.5 L637.2,469.3 L639.1,469.1 L641.0,468.8 L642.8,468.5 L644.7,468.2 L646.5,467.8 L648.4,467.4 L650.3,466.9 L652.1,466.4 L654.0,465.8 L655.8,465.2 L657.7,464.5 L659.6,463.8 L661.4,462.9 L663.3,462.0 L665.1,461.0 L667.0,459.9 L668.9,458.8 L670.7,457.5 L672.6,456.1 L674.5,454.6 L676.3,453.0 L678.2,451.3 L680.0,449.5 L681.9,447.6 L683.8,445.5 L685.6,443.3 L687.5,441.0 L689.3,438.6 L691.2,436.1 L693.1,433.4 L694.9,430.6 L696.8,427.7 L698.6,424.8 L700.5,421.7 L702.4,418.5 L704.2,415.2 L706.1,411.9 L708.0,408.5 L709.8,405.0 L711.7,401.5 L713.5,398.0 L715.4,394.4 L717.3,390.9 L719.1,387.4 L721.0,383.9 L722.8,380.5 L724.7,377.1 L726.6,373.8 L728.4,370.7 L730.3,367.6 L732.1,364.7 L734.0,362.0 L735.9,359.4 L737.7,357.0 L739.6,354.8 L741.4,352.9 L743.3,351.1 L745.2,349.6 L747.0,348.4 L748.9,347.4 L750.8,346.7 L752.6,346.2 L754.5,346.0 L756.3,346.1 L758.2,346.4 L760.1,347.1 L761.9,348.0 L763.8,349.1 L765.6,350.5 L767.5,352.1 L769.4,354.0 L771.2,356.1 L773.1,358.4 L774.9,360.9 L776.8,363.6 L778.7,366.5 L780.5,369.4 L782.4,372.6 L784.3,375.8 L786.1,379.1 L788.0,382.5 L789.8,386.0 L791.7,389.5 L793.6,393.0 L795.4,396.6 L797.3,400.1 L799.1,403.6 L801.0,407.1 L802.9,410.5 L804.7,413.9 L806.6,417.2 L808.4,420.4 L810.3,423.5 L812.2,426.6 L814.0,429.5 L815.9,432.3 L817.8,435.0 L819.6,437.6 L821.5,440.1 L823.3,442.4 L825.2,444.7 L827.1,446.8 L828.9,448.7 L830.8,450.6 L832.6,452.4 L834.5,454.0 L836.4,455.5 L838.2,456.9 L840.1,458.3 L841.9,459.5 L843.8,460.6 L845.7,461.6 L847.5,462.6 L849.4,463.4 L851.2,464.2 L853.1,464.9 L855.0,465.6 L856.8,466.2 L858.7,466.7 L860.6,467.2 L862.4,467.6 L864.3,468.0 L866.1,468.4 L868.0,468.7 L869.9,469.0 L871.7,469.2 L873.6,469.4 L875.4,469.6 L877.3,469.8 L879.2,469.9 L881.0,470.1 L882.9,470.2 L884.7,470.3 L886.6,470.4 L888.5,470.5 L890.3,470.5 L892.2,470.6 L894.1,470.6 L895.9,470.7 L897.8,470.7 L899.6,470.7 L901.5,470.8 L903.4,470.8 L905.2,470.8 L907.1,470.8 L908.9,470.8 L910.8,470.8 L912.7,470.9 L914.5,470.9 L916.4,470.9 L918.2,470.9 L920.1,470.9 L922.0,470.9 L923.8,470.9 L925.7,470.9 L927.5,470.9 L929.4,470.9 L931.3,470.9 L933.1,470.9 L935.0,470.9 L936.9,470.9 L938.7,470.9 L940.6,470.9 L942.4,470.9 L944.3,470.9 L946.2,470.9 L948.0,470.9 L949.9,470.9 L951.7,470.9 L953.6,470.9 L955.5,470.9 L957.3,470.9 L959.2,470.9 L961.0,470.9 L962.9,470.9 L964.8,470.9 L966.6,470.9 L968.5,470.9 L970.4,470.9 L972.2,470.9 L974.1,470.9 L975.9,470.9 L977.8,470.9 L979.7,470.9 L981.5,470.9 L983.4,470.9 L985.2,470.9 L987.1,470.9 L989.0,470.9 L990.8,470.9 L992.7,470.9 L994.5,470.9 L996.4,470.9 L998.3,470.9 L1000.1,470.9 L1002.0,470.9 L1003.9,470.9 L1005.7,470.9 L1007.6,470.9 L1009.4,470.9 L1011.3,470.9 L1013.2,470.9 L1015.0,470.9 L1016.9,470.9 L1018.7,470.9 L1020.6,470.9 L1022.5,470.9 L1024.3,470.9 L1026.2,470.9 L1028.0,470.9 L1029.9,470.9 L1031.8,470.9 L1033.6,470.9 L1035.5,470.9 L1037.3,470.9 L1039.2,470.9 L1041.1,470.9 L1042.9,470.9 L1044.8,470.9 L1046.7,470.9 L1048.5,470.9 L1050.4,470.9 L1052.2,470.9 L1054.1,470.9 L1056.0,470.9 L1057.8,470.9 L1059.7,470.9 L1061.5,470.9 L1063.4,470.9 L1065.3,470.9 L1067.1,470.9 L1069.0,470.9 L1070.8,470.9 L1072.7,470.9 L1074.6,470.9 L1076.4,470.9 L1078.3,470.9 L1080.2,470.9 L1082.0,470.9 L1083.9,470.9 L1085.7,470.9 L1087.6,470.9 L1089.5,470.9 L1091.3,470.9 L1093.2,470.9 L1095.0,470.9 L1096.9,470.9 L1098.8,470.9 L1100.6,470.9 L1102.5,470.9 L1104.3,470.9 L1106.2,470.9 L1108.1,470.9 L1109.9,470.9 L1111.8,470.9 L1113.6,470.9 L1115.5,470.9 L1117.4,470.9 L1119.2,470.9 L1121.1,470.9 L1123.0,470.9 L1124.8,470.9 L1126.7,470.9 L1128.5,470.9 L1130.4,470.9 L1132.3,470.9 L1134.1,470.9 L1136.0,470.9 L1137.8,470.9 L1139.7,470.9 L1141.6,470.9 L1143.4,470.9 L1145.3,470.9 L1147.1,470.9 L1149.0,470.9 L1150.9,470.9 L1152.7,470.9 L1154.6,470.9 L1156.5,470.9 L1158.3,470.9 L1160.2,470.9 L1162.0,470.9 L1163.9,470.9 L1165.8,470.9 L1167.6,470.9 L1169.5,470.9 L1171.3,470.9 L1173.2,470.9 L1175.1,470.9 L1176.9,470.9 L1178.8,470.9 L1180.6,470.9 L1182.5,470.9 L1184.4,470.9 L1186.2,470.9" fill="none" stroke="#00ff00" stroke-width="2" stroke-dasharray="8 3" shape-rendering="crispEdges"/>
<path d="M488.4,470.9 L490.2,470.9 L492.1,470.9 L493.9,470.9 L495.8,470.9 L497.7,470.9 L499.5,470.9 L501.4,470.9 L503.2,470.9 L505.1,470.9 L507.0,470.9 L508.8,470.9 L510.7,470.9 L512.5,470.9 L514.4,470.9 L516.3,470.9 L518.1,470.9 L520.0,470.9 L521.9,470.9 L523.7,470.9 L525.6,470.9 L527.4,470.9 L529.3,470.9 L531.2,470.9 L533.0,470.9 L534.9,470.9 L536.7,470.9 L538.6,470.9 L540.5,470.9 L542.3,470.9 L544.2,470.9 L546.0,470.9 L547.9,470.9 L549.8,470.9 L551.6,470.9 L553.5,470.9 L555.3,470.9 L557.2,470.9 L559.1,470.9 L560.9,470.9 L562.8,470.9 L564.7,470.9 L566.5,470.9 L568.4,470.9 L570.2,470.9 L572.1,470.9 L574.0,470.9 L575.8,470.9 L577.7,470.9 L579.5,470.9 L581.4,470.9 L583.3,470.9 L585.1,470.9 L587.0,470.9 L588.8,470.9 L590.7,470.9 L592.6,470.9 L594.4,470.9 L596.3,470.9 L598.2,470.9 L600.0,470.9 L601.9,470.9 L603.7,470.9 L605.6,470.9 L607.5,470.9 L609.3,470.9 L611.2,470.9 L613.0,470.9 L614.9,470.9 L616.8,470.9 L618.6,470.9 L620.5,470.9 L622.3,470.9 L624.2,470.9 L626.1,470.9 L627.9,470.9 L629.8,470.9 L631.7,470.9 L633.5,470.9 L635.4,470.9 L637.2,470.9 L639.1,470.9 L641.0,470.9 L642.8,470.9 L644.7,470.9 L646.5,470.9 L648.4,470.9 L650.3,470.9 L652.1,470.9 L654.0,470.9 L655.8,470.9 L657.7,470.9 L659.6,470.9 L661.4,470.9 L663.3,470.9 L665.1,470.9 L667.0,470.9 L668.9,470.9 L670.7,470.9 L672.6,470.9 L674.5,470.9 L676.3,470.9 L678.2,470.9 L680.0,470.9 L681.9,470.9 L683.8,470.9 L685.6,470.9 L687.5,470.9 L689.3,470.9 L691.2,470.9 L693.1,470.9 L694.9,470.9 L696.8,470.9 L698.6,470.9 L700.5,470.9 L702.4,470.9 L704.2,470.9 L706.1,470.9 L708.0,470.9 L709.8,470.9 L711.7,470.9 L713.5,470.9 L715.4,470.9 L717.3,470.9 L719.1,470.9 L721.0,470.9 L722.8,470.9 L724.7,470.9 L726.6,470.9 L728.4,470.9 L730.3,470.9 L732.1,470.9 L734.0,470.9 L735.9,470.9 L737.7,470.9 L739.6,470.9 L741.4,470.9 L743.3,470.9 L745.2,470.9 L747.0,470.9 L748.9,470.9 L750.8,470.9 L752.6,470.9 L754.5,470.9 L756.3,470.9 L758.2,470.9 L760.1,470.9 L761.9,470.9 L763.8,470.9 L765.6,470.9 L767.5,470.9 L769.4,470.9 L771.2,470.9 L773.1,470.9 L774.9,470.9 L776.8,470.9 L778.7,470.9 L780.5,470.9 L782.4,470.9 L784.3,470.9 L786.1,470.9 L788.0,470.9 L789.8,470.9 L791.7,470.8 L793.6,470.8 L795.4,470.8 L797.3,470.8 L799.1,470.7 L801.0,470.7 L802.9,470.6 L804.7,470.5 L806.6,470.5 L808.4,470.3 L810.3,470.2 L812.2,470.0 L814.0,469.8 L815.9,469.6 L817.8,469.3 L819.6,468.9 L821.5,468.5 L823.3,468.0 L825.2,467.3 L827.1,466.6 L828.9,465.8 L830.8,464.8 L832.6,463.6 L834.5,462.2 L836.4,460.7 L838.2,458.9 L840.1,456.8 L841.9,454.5 L843.8,451.8 L845.7,448.8 L847.5,445.4 L849.4,441.6 L851.2,437.4 L853.1,432.7 L855.0,427.6 L856.8,421.9 L858.7,415.7 L860.6,408.9 L862.4,401.6 L864.3,393.8 L866.1,385.4 L868.0,376.4 L869.9,366.9 L871.7,356.9 L873.6,346.5 L875.4,335.6 L877.3,324.3 L879.2,312.7 L881.0,300.8 L882.9,288.8 L884.7,276.7 L886.6,264.5 L888.5,252.5 L890.3,240.7 L892.2,229.2 L894.1,218.1 L895.9,207.5 L897.8,197.5 L899.6,188.3 L901.5,179.9 L903.4,172.4 L905.2,165.9 L907.1,160.5 L908.9,156.2 L910.8,153.1 L912.7,151.3 L914.5,150.7 L916.4,151.3 L918.2,153.1 L920.1,156.2 L922.0,160.5 L923.8,165.9 L925.7,172.4 L927.5,179.9 L929.4,188.3 L931.3,197.5 L933.1,207.5 L935.0,218.1 L936.9,229.2 L938.7,240.7 L940.6,252.5 L942.4,264.5 L944.3,276.7 L946.2,288.8 L948.0,300.8 L949.9,312.7 L951.7,324.3 L953.6,335.6 L955.5,346.5 L957.3,356.9 L959.2,366.9 L961.0,376.4 L962.9,385.4 L964.8,393.8 L966.6,401.6 L968.5,408.9 L970.4,415.7 L972.2,421.9 L974.1,427.6 L975.9,432.7 L977.8,437.4 L979.7,441.6 L981.5,445.4 L983.4,448.8 L985.2,451.8 L987.1,454.5 L989.0,456.8 L990.8,458.9 L992.7,460.7 L994.5,462.2 L996.4,463.6 L998.3,464.8 L1000.1,465.8 L1002.0,466.6 L1003.9,467.3 L1005.7,468.0 L1007.6,468.5 L1009.4,468.9 L1011.3,469.3 L1013.2,469.6 L1015.0,469.8 L1016.9,470.0 L1018.7,470.2 L1020.6,470.3 L1022.5,470.5 L1024.3,470.5 L1026.2,470.6 L1028.0,470.7 L1029.9,470.7 L1031.8,470.8 L1033.6,470.8 L1035.5,470.8 L1037.3,470.8 L1039.2,470.9 L1041.1,470.9 L1042.9,470.9 L1044.8,470.9 L1046.7,470.9 L1048.5,470.9 L1050.4,470.9 L1052.2,470.9 L1054.1,470.9 L1056.0,470.9 L1057.8,470.9 L1059.7,470.9 L1061.5,470.9 L1063.4,470.9 L1065.3,470.9 L1067.1,470.9 L1069.0,470.9 L1070.8,470.9 L1072.7,470.9 L1074.6,470.9 L1076.4,470.9 L1078.3,470.9 L1080.2,470.9 L1082.0,470.9 L1083.9,470.9 L1085.7,470.9 L1087.6,470.9 L1089.5,470.9 L1091.3,470.9 L1093.2,470.9 L1095.0,470.9 L1096.9,470.9 L1098.8,470.9 L1100.6,470.9 L1102.5,470.9 L1104.3,470.9 L1106.2,470.9 L1108.1,470.9 L1109.9,470.9 L1111.8,470.9 L1113.6,470.9 L1115.5,470.9 L1117.4,470.9 L1119.2,470.9 L1121.1,470.9 L1123.0,470.9 L1124.8,470.9 L1126.7,470.9 L1128.5,470.9 L1130.4,470.9 L1132.3,470.9 L1134.1,470.9 L1136.0,470.9 L1137.8,470.9 L1139.7,470.9 L1141.6,470.9 L1143.4,470.9 L1145.3,470.9 L1147.1,470.9 L1149.0,470.9 L1150.9,470.9 L1152.7,470.9 L1154.6,470.9 L1156.5,470.9 L1158.3,470.9 L1160.2,470.9 L1162.0,470.9 L1163.9,470.9 L1165.8,470.9 L1167.6,470.9 L1169.5,470.9 L1171.3,470.9 L1173.2,470.9 L1175.1,470.9 L1176.9,470.9 L1178.8,470.9 L1180.6,470.9 L1182.5,470.9 L1184.4,470.9 L1186.2,470.9" fill="none" stroke="#00ff00" stroke-width="2" stroke-dasharray="8 3" shape-rendering="crispEdges"/>
<path d="M488.4,432.6 L490.2,431.6 L492.1,430.6 L493.9,429.6 L495.8,428.6 L497.7,427.8 L499.5,426.9 L501.4,426.1 L503.2,425.4 L505.1,424.8 L507.0,424.2 L508.8,423.7 L510.7,423.2 L512.5,422.8 L514.4,422.5 L516.3,422.2 L518.1,422.0 L520.0,421.8 L521.9,421.7 L523.7,421.6 L525.6,421.5 L527.4,421.5 L529.3,421.5 L531.2,421.5 L533.0,421.5 L534.9,421.6 L536.7,421.6 L538.6,421.7 L540.5,421.7 L542.3,421.8 L544.2,421.8 L546.0,421.9 L547.9,421.9 L549.8,421.9 L551.6,421.9 L553.5,421.8 L555.3,421.7 L557.2,421.6 L559.1,421.4 L560.9,421.2 L562.8,420.9 L564.7,420.6 L566.5,420.2 L568.4,419.8 L570.2,419.3 L572.1,418.7 L574.0,418.1 L575.8,417.4 L577.7,416.7 L579.5,415.9 L581.4,415.0 L583.3,414.1 L585.1,413.2 L587.0,412.2 L588.8,411.1 L590.7,410.0 L592.6,408.9 L594.4,407.7 L596.3,406.5 L598.2,405.3 L600.0,404.1 L601.9,402.9 L603.7,401.6 L605.6,400.4 L607.5,399.2 L609.3,398.0 L611.2,396.9 L613.0,395.7 L614.9,394.6 L616.8,393.6 L618.6,392.6 L620.5,391.7 L622.3,390.9 L624.2,390.1 L626.1,389.4 L627.9,388.7 L629.8,388.2 L631.7,387.7 L633.5,387.4 L635.4,387.1 L637.2,386.9 L639.1,386.8 L641.0,386.8 L642.8,386.8 L644.7,387.0 L646.5,387.2 L648.4,387.5 L650.3,387.9 L652.1,388.3 L654.0,388.7 L655.8,389.3 L657.7,389.8 L659.6,390.4 L661.4,391.0 L663.3,391.6 L665.1,392.1 L667.0,392.7 L668.9,393.3 L670.7,393.8 L672.6,394.2 L674.5,394.6 L676.3,394.9 L678.2,395.2 L680.0,395.3 L681.9,395.3 L683.8,395.3 L685.6,395.1 L687.5,394.8 L689.3,394.3 L691.2,393.8 L693.1,393.0 L694.9,392.2 L696.8,391.2 L698.6,390.0 L700.5,388.7 L702.4,387.3 L704.2,385.8 L706.1,384.1 L708.0,382.3 L709.8,380.4 L711.7,378.4 L713.5,376.4 L715.4,374.2 L717.3,372.0 L719.1,369.8 L721.0,367.5 L722.8,365.2 L724.7,363.0 L726.6,360.8 L728.4,358.6 L730.3,356.5 L732.1,354.4 L734.0,352.5 L735.9,350.7 L737.7,349.0 L739.6,347.5 L741.4,346.2 L743.3,345.0 L745.2,344.1 L747.0,343.3 L748.9,342.8 L750.8,342.5 L752.6,342.4 L754.5,342.6 L756.3,343.0 L758.2,343.7 L760.1,344.6 L761.9,345.7 L763.8,347.1 L765.6,348.7 L767.5,350.5 L769.4,352.6 L771.2,354.9 L773.1,357.3 L774.9,359.9 L776.8,362.7 L778.7,365.7 L780.5,368.7 L782.4,371.9 L784.3,375.2 L786.1,378.6 L788.0,382.1 L789.8,385.6 L791.7,389.1 L793.6,392.7 L795.4,396.2 L797.3,399.7 L799.1,403.2 L801.0,406.7 L802.9,410.1 L804.7,413.4 L806.6,416.6 L808.4,419.8 L810.3,422.8 L812.2,425.6 L814.0,428.4 L815.9,430.9 L817.8,433.3 L819.6,435.6 L821.5,437.6 L823.3,439.5 L825.2,441.1 L827.1,442.5 L828.9,443.6 L830.8,444.5 L832.6,445.1 L834.5,445.3 L836.4,445.3 L838.2,444.9 L840.1,444.2 L841.9,443.0 L843.8,441.5 L845.7,439.5 L847.5,437.1 L849.4,434.2 L851.2,430.7 L853.1,426.8 L855.0,422.3 L856.8,417.2 L858.7,411.5 L860.6,405.2 L862.4,398.4 L864.3,390.9 L866.1,382.9 L868.0,374.2 L869.9,365.0 L871.7,355.3 L873.6,345.0 L875.4,334.3 L877.3,323.2 L879.2,311.7 L881.0,300.0 L882.9,288.1 L884.7,276.0 L886.6,264.0 L888.5,252.1 L890.3,240.3 L892.2,228.8 L894.1,217.8 L895.9,207.2 L897.8,197.3 L899.6,188.1 L901.5,179.7 L903.4,172.3 L905.2,165.8 L907.1,160.4 L908.9,156.2 L910.8,153.1 L912.7,151.2 L914.5,150.6 L916.4,151.2 L918.2,153.1 L920.1,156.2 L922.0,160.5 L923.8,165.9 L925.7,172.4 L927.5,179.9 L929.4,188.3 L931.3,197.5 L933.1,207.5 L935.0,218.1 L936.9,229.2 L938.7,240.7 L940.6,252.5 L942.4,264.5 L944.3,276.7 L946.2,288.8 L948.0,300.8 L949.9,312.7 L951.7,324.3 L953.6,335.6 L955.5,346.5 L957.3,356.9 L959.2,366.9 L961.0,376.4 L962.9,385.4 L964.8,393.8 L966.6,401.6 L968.5,408.9 L970.4,415.7 L972.2,421.9 L974.1,427.6 L975.9,432.7 L977.8,437.4 L979.7,441.6 L981.5,445.4 L983.4,448.8 L985.2,451.8 L987.1,454.5 L989.0,456.8 L990.8,458.9 L992.7,460.7 L994.5,462.2 L996.4,463.6 L998.3,464.8 L1000.1,465.8 L1002.0,466.6 L1003.9,467.3 L1005.7,468.0 L1007.6,468.5 L1009.4,468.9 L1011.3,469.3 L1013.2,469.6 L1015.0,469.8 L1016.9,470.0 L1018.7,470.2 L1020.6,470.3 L1022.5,470.5 L1024.3,470.5 L1026.2,470.6 L1028.0,470.7 L1029.9,470.7 L1031.8,470.8 L1033.6,470.8 L1035.5,470.8 L1037.3,470.8 L1039.2,470.9 L1041.1,470.9 L1042.9,470.9 L1044.8,470.9 L1046.7,470.9 L1048.5,470.9 L1050.4,470.9 L1052.2,470.9 L1054.1,470.9 L1056.0,470.9 L1057.8,470.9 L1059.7,470.9 L1061.5,470.9 L1063.4,470.9 L1065.3,470.9 L1067.1,470.9 L1069.0,470.9 L1070.8,470.9 L1072.7,470.9 L1074.6,470.9 L1076.4,470.9 L1078.3,470.9 L1080.2,470.9 L1082.0,470.9 L1083.9,470.9 L1085.7,470.9 L1087.6,470.9 L1089.5,470.9 L1091.3,470.9 L1093.2,470.9 L1095.0,470.9 L1096.9,470.9 L1098.8,470.9 L1100.6,470.9 L1102.5,470.9 L1104.3,470.9 L1106.2,470.9 L1108.1,470.9 L1109.9,470.9 L1111.8,470.9 L1113.6,470.9 L1115.5,470.9 L1117.4,470.9 L1119.2,470.9 L1121.1,470.9 L1123.0,470.9 L1124.8,470.9 L1126.7,470.9 L1128.5,470.9 L1130.4,470.9 L1132.3,470.9 L1134.1,470.9 L1136.0,470.9 L1137.8,470.9 L1139.7,470.9 L1141.6,470.9 L1143.4,470.9 L1145.3,470.9 L1147.1,470.9 L1149.0,470.9 L1150.9,470.9 L1152.7,470.9 L1154.6,470.9 L1156.5,470.9 L1158.3,470.9 L1160.2,470.9 L1162.0,470.9 L1163.9,470.9 L1165.8,470.9 L1167.6,470.9 L1169.5,470.9 L1171.3,470.9 L1173.2,470.9 L1175.1,470.9 L1176.9,470.9 L1178.8,470.9 L1180.6,470.9 L1182.5,470.9 L1184.4,470.9 L1186.2,470.9" fill="none" stroke="#ffff00" stroke-width="2" stroke-dasharray="9 2" shape-rendering="crispEdges"/>
<path d="M488.4,467.8 L490.2,467.8 L492.1,467.8 L493.9,467.8 L495.8,467.8 L497.7,467.8 L499.5,467.8 L501.4,467.8 L503.2,467.8 L505.1,467.8 L507.0,467.8 L508.8,467.8 L510.7,467.8 L512.5,467.8 L514.4,467.8 L516.3,467.8 L518.1,467.7 L520.0,467.6 L521.9,467.6 L523.7,467.5 L525.6,467.4 L527.4,467.3 L529.3,467.2 L531.2,467.1 L533.0,467.1 L534.9,467.0 L536.7,466.9 L538.6,466.8 L540.5,466.7 L542.3,466.6 L544.2,466.5 L546.0,466.5 L547.9,466.4 L549.8,466.3 L551.6,466.2 L553.5,466.1 L555.3,466.0 L557.2,466.0 L559.1,465.9 L560.9,465.8 L562.8,465.6 L564.7,465.4 L566.5,465.2 L568.4,465.0 L570.2,464.8 L572.1,464.7 L574.0,464.5 L575.8,464.3 L577.7,464.1 L579.5,463.9 L581.4,463.7 L583.3,463.6 L585.1,463.4 L587.0,463.2 L588.8,463.0 L590.7,462.8 L592.6,462.6 L594.4,462.4 L596.3,462.3 L598.2,462.1 L600.0,461.8 L601.9,461.5 L603.7,461.2 L605.6,460.9 L607.5,460.6 L609.3,460.3 L611.2,460.0 L613.0,459.7 L614.9,459.4 L616.8,459.1 L618.6,458.8 L620.5,458.5 L622.3,458.2 L624.2,457.9 L626.1,457.6 L627.9,457.3 L629.8,457.0 L631.7,456.7 L633.5,456.4 L635.4,456.1 L637.2,455.8 L639.1,455.6 L641.0,455.5 L642.8,455.5 L644.7,455.4 L646.5,455.4 L648.4,455.3 L650.3,455.2 L652.1,455.2 L654.0,455.1 L655.8,455.0 L657.7,454.9 L659.6,454.9 L661.4,454.8 L663.3,454.7 L665.1,454.6 L667.0,454.5 L668.9,454.3 L670.7,454.2 L672.6,454.0 L674.5,453.9 L676.3,453.7 L678.2,453.5 L680.0,453.3 L681.9,453.0 L683.8,452.7 L685.6,452.4 L687.5,452.0 L689.3,451.5 L691.2,451.0 L693.1,450.5 L694.9,449.9 L696.8,449.2 L698.6,448.4 L700.5,447.6 L702.4,446.7 L704.2,445.7 L706.1,444.6 L708.0,443.4 L709.8,442.2 L711.7,440.9 L713.5,439.5 L715.4,438.1 L717.3,436.6 L719.1,435.1 L721.0,433.5 L722.8,431.9 L724.7,430.3 L726.6,428.7 L728.4,427.1 L730.3,425.5 L732.1,424.0 L734.0,422.6 L735.9,421.2 L737.7,420.0 L739.6,418.8 L741.4,417.8 L743.3,417.0 L745.2,416.3 L747.0,415.7 L748.9,415.4 L750.8,415.2 L752.6,415.3 L754.5,415.5 L756.3,415.9 L758.2,416.5 L760.1,417.2 L761.9,418.1 L763.8,419.1 L765.6,420.3 L767.5,421.6 L769.4,423.0 L771.2,424.5 L773.1,426.0 L774.9,427.6 L776.8,429.3 L778.7,430.9 L780.5,432.5 L782.4,434.1 L784.3,435.7 L786.1,437.3 L788.0,438.8 L789.8,440.2 L791.7,441.6 L793.6,442.8 L795.4,444.0 L797.3,445.2 L799.1,446.2 L801.0,447.2 L802.9,448.0 L804.7,448.8 L806.6,449.5 L808.4,450.2 L810.3,450.7 L812.2,451.2 L814.0,451.6 L815.9,452.0 L817.8,452.3 L819.6,452.5 L821.5,452.6 L823.3,452.7 L825.2,452.8 L827.1,452.7 L828.9,452.6 L830.8,452.4 L832.6,452.0 L834.5,451.6 L836.4,451.1 L838.2,450.3 L840.1,449.5 L841.9,448.4 L843.8,447.1 L845.7,445.5 L847.5,443.6 L849.4,441.4 L851.2,438.9 L853.1,435.9 L855.0,432.4 L856.8,428.5 L858.7,424.0 L860.6,419.0 L862.4,413.3 L864.3,407.0 L866.1,399.9 L868.0,392.2 L869.9,383.8 L871.7,374.6 L873.6,364.7 L875.4,354.2 L877.3,343.0 L879.2,331.1 L881.0,318.8 L882.9,306.0 L884.7,292.8 L886.6,279.4 L888.5,265.9 L890.3,252.5 L892.2,239.2 L894.1,226.2 L895.9,213.7 L897.8,201.9 L899.6,190.9 L901.5,180.9 L903.4,172.0 L905.2,164.3 L907.1,158.0 L908.9,153.1 L910.8,149.7 L912.7,148.0 L914.5,147.8 L916.4,149.0 L918.2,151.6 L920.1,155.6 L922.0,160.7 L923.8,167.1 L925.7,174.6 L927.5,183.1 L929.4,192.5 L931.3,202.7 L933.1,213.6 L935.0,225.1 L936.9,237.0 L938.7,249.2 L940.6,261.6 L942.4,274.0 L944.3,286.5 L946.2,298.7 L948.0,310.7 L949.9,322.4 L951.7,333.8 L953.6,344.6 L955.5,354.9 L957.3,364.7 L959.2,373.9 L961.0,382.5 L962.9,390.5 L964.8,397.9 L966.6,404.7 L968.5,410.9 L970.4,416.6 L972.2,421.8 L974.1,426.4 L975.9,430.6 L977.8,434.4 L979.7,437.7 L981.5,440.6 L983.4,443.2 L985.2,445.4 L987.1,447.4 L989.0,449.1 L990.8,450.6 L992.7,451.9 L994.5,453.0 L996.4,454.0 L998.3,454.8 L1000.1,455.5 L1002.0,456.1 L1003.9,456.7 L1005.7,457.1 L1007.6,457.6 L1009.4,458.4 L1011.3,459.1 L1013.2,459.7 L1015.0,460.4 L1016.9,461.0 L1018.7,461.6 L1020.6,462.2 L1022.5,462.8 L1024.3,463.3 L1026.2,463.8 L1028.0,464.0 L1029.9,464.2 L1031.8,464.4 L1033.6,464.6 L1035.5,464.8 L1037.3,465.0 L1039.2,465.2 L1041.1,465.4 L1042.9,465.5 L1044.8,465.7 L1046.7,465.9 L1048.5,466.1 L1050.4,466.3 L1052.2,466.5 L1054.1,466.7 L1056.0,466.8 L1057.8,467.0 L1059.7,467.2 L1061.5,467.4 L1063.4,467.6 L1065.3,467.8 L1067.1,467.9 L1069.0,468.1 L1070.8,468.3 L1072.7,468.3 L1074.6,468.3 L1076.4,468.4 L1078.3,468.4 L1080.2,468.4 L1082.0,468.4 L1083.9,468.5 L1085.7,468.5 L1087.6,468.5 L1089.5,468.5 L1091.3,468.6 L1093.2,468.6 L1095.0,468.6 L1096.9,468.6 L1098.8,468.7 L1100.6,468.7 L1102.5,468.7 L1104.3,468.8 L1106.2,468.8 L1108.1,468.8 L1109.9,468.8 L1111.8,468.9 L1113.6,468.9 L1115.5,468.9 L1117.4,468.9 L1119.2,469.0 L1121.1,469.0 L1123.0,469.0 L1124.8,469.0 L1126.7,469.0 L1128.5,469.0 L1130.4,469.0 L1132.3,469.0 L1134.1,469.0 L1136.0,469.0 L1137.8,469.0 L1139.7,469.0 L1141.6,469.0 L1143.4,469.0 L1145.3,469.0 L1147.1,469.0 L1149.0,469.1 L1150.9,469.1 L1152.7,469.1 L1154.6,469.1 L1156.5,469.1 L1158.3,469.1 L1160.2,469.1 L1162.0,469.1 L1163.9,469.1 L1165.8,469.1 L1167.6,469.1 L1169.5,469.1 L1171.3,469.1 L1173.2,469.1 L1175.1,469.1 L1176.9,469.1 L1178.8,469.1 L1180.6,469.1 L1182.5,469.1 L1184.4,469.1 L1186.2,469.1" fill="none" stroke="#00ffff" stroke-width="2" shape-rendering="crispEdges"/>
<text x="493" y="129" fill="#ff0000" stroke="#ff0000" style="font-family:&quot;Liberation Mono&quot;,monospace;font-size:14px;letter-spacing:1.6px;stroke-width:0.45px">Fit start</text>
<text x="997" y="129" fill="#ff0000" stroke="#ff0000" text-anchor="end" style="font-family:&quot;Liberation Mono&quot;,monospace;font-size:14px;letter-spacing:1.6px;stroke-width:0.45px">Fit end</text>
<text x="523" y="129" fill="#ff00ff" stroke="#ff00ff" style="font-family:&quot;Liberation Mono&quot;,monospace;font-size:14px;letter-spacing:1.6px;stroke-width:0.45px">1</text>
<text x="643" y="129" fill="#0000ff" stroke="#0000ff" style="font-family:&quot;Liberation Mono&quot;,monospace;font-size:14px;letter-spacing:1.6px;stroke-width:0.45px">2</text>
<text x="757" y="129" fill="#0000ff" stroke="#0000ff" style="font-family:&quot;Liberation Mono&quot;,monospace;font-size:14px;letter-spacing:1.6px;stroke-width:0.45px">3</text>
<text x="917" y="129" fill="#0000ff" stroke="#0000ff" style="font-family:&quot;Liberation Mono&quot;,monospace;font-size:14px;letter-spacing:1.6px;stroke-width:0.45px">4</text>
</g>
<line x1="480.5" y1="113" x2="480.5" y2="470" stroke="#000" stroke-width="1"/>
<line x1="476" y1="453.5" x2="480" y2="453.5" stroke="#000"/>
<line x1="476" y1="436.5" x2="480" y2="436.5" stroke="#000"/>
<line x1="476" y1="418.5" x2="480" y2="418.5" stroke="#000"/>
<line x1="476" y1="401.5" x2="480" y2="401.5" stroke="#000"/>
<line x1="472" y1="383.5" x2="480" y2="383.5" stroke="#000"/>
<line x1="476" y1="365.5" x2="480" y2="365.5" stroke="#000"/>
<line x1="476" y1="348.5" x2="480" y2="348.5" stroke="#000"/>
<line x1="476" y1="330.5" x2="480" y2="330.5" stroke="#000"/>
<line x1="476" y1="313.5" x2="480" y2="313.5" stroke="#000"/>
<line x1="472" y1="295.5" x2="480" y2="295.5" stroke="#000"/>
<line x1="476" y1="278.5" x2="480" y2="278.5" stroke="#000"/>
<line x1="476" y1="260.5" x2="480" y2="260.5" stroke="#000"/>
<line x1="476" y1="243.5" x2="480" y2="243.5" stroke="#000"/>
<line x1="476" y1="225.5" x2="480" y2="225.5" stroke="#000"/>
<line x1="472" y1="207.5" x2="480" y2="207.5" stroke="#000"/>
<line x1="476" y1="190.5" x2="480" y2="190.5" stroke="#000"/>
<line x1="476" y1="172.5" x2="480" y2="172.5" stroke="#000"/>
<line x1="476" y1="155.5" x2="480" y2="155.5" stroke="#000"/>
<line x1="476" y1="137.5" x2="480" y2="137.5" stroke="#000"/>
<line x1="472" y1="120.5" x2="480" y2="120.5" stroke="#000"/>
<text x="466.5" y="388.065" text-anchor="end" style="font-family:&quot;Liberation Sans&quot;;font-size:13.5px" fill="#000">50</text>
<text x="466.5" y="300.23" text-anchor="end" style="font-family:&quot;Liberation Sans&quot;;font-size:13.5px" fill="#000">100</text>
<text x="466.5" y="212.39499999999998" text-anchor="end" style="font-family:&quot;Liberation Sans&quot;;font-size:13.5px" fill="#000">150</text>
<text x="466.5" y="124.56" text-anchor="end" style="font-family:&quot;Liberation Sans&quot;;font-size:13.5px" fill="#000">200</text>
<line x1="489" y1="479.5" x2="1186" y2="479.5" stroke="#000"/>
<line x1="523.5" y1="480" x2="523.5" y2="483" stroke="#000"/>
<line x1="561.5" y1="480" x2="561.5" y2="483" stroke="#000"/>
<line x1="598.5" y1="480" x2="598.5" y2="483" stroke="#000"/>
<line x1="635.5" y1="480" x2="635.5" y2="487" stroke="#000"/>
<line x1="672.5" y1="480" x2="672.5" y2="483" stroke="#000"/>
<line x1="709.5" y1="480" x2="709.5" y2="483" stroke="#000"/>
<line x1="747.5" y1="480" x2="747.5" y2="483" stroke="#000"/>
<line x1="784.5" y1="480" x2="784.5" y2="483" stroke="#000"/>
<line x1="821.5" y1="480" x2="821.5" y2="487" stroke="#000"/>
<line x1="858.5" y1="480" x2="858.5" y2="483" stroke="#000"/>
<line x1="896.5" y1="480" x2="896.5" y2="483" stroke="#000"/>
<line x1="933.5" y1="480" x2="933.5" y2="483" stroke="#000"/>
<line x1="970.5" y1="480" x2="970.5" y2="483" stroke="#000"/>
<line x1="1007.5" y1="480" x2="1007.5" y2="487" stroke="#000"/>
<line x1="1044.5" y1="480" x2="1044.5" y2="483" stroke="#000"/>
<line x1="1082.5" y1="480" x2="1082.5" y2="483" stroke="#000"/>
<line x1="1119.5" y1="480" x2="1119.5" y2="483" stroke="#000"/>
<line x1="1156.5" y1="480" x2="1156.5" y2="483" stroke="#000"/>
<text x="634.5" y="502.5" text-anchor="middle" style="font-family:&quot;Liberation Sans&quot;;font-size:13.5px" fill="#000">50</text>
<text x="820.5999999999999" y="502.5" text-anchor="middle" style="font-family:&quot;Liberation Sans&quot;;font-size:13.5px" fill="#000">100</text>
<text x="1006.6999999999999" y="502.5" text-anchor="middle" style="font-family:&quot;Liberation Sans&quot;;font-size:13.5px" fill="#000">150</text>
<text x="836" y="520" text-anchor="middle" style="font-family:&quot;Liberation Sans&quot;;font-size:14px;font-weight:bold;letter-spacing:0.3px" fill="#000">Time [a.u.]</text>
<text transform="translate(436,292.5) rotate(-90)" text-anchor="middle" style="font-family:&quot;Liberation Sans&quot;;font-size:14px;font-weight:bold;letter-spacing:0.3px" fill="#000">I(t) [a.u.]</text>
</svg>
</body></html>
